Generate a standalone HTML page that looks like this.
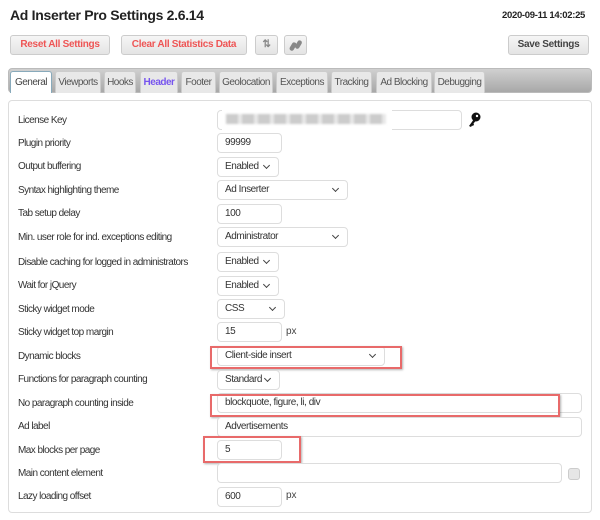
<!DOCTYPE html><html><head><style>
*{box-sizing:border-box}body{margin:0;width:600px;height:520px;background:#fff;font-family:"Liberation Sans",Arial,sans-serif;font-size:10px;color:#222;position:relative;overflow:hidden}
.a{position:absolute}
.btn{position:absolute;top:35px;height:20px;border:1px solid #ccc;border-radius:3px;background:linear-gradient(#f6f6f6,#e4e4e4);color:#e55;font-weight:bold;font-size:10px;letter-spacing:-0.3px;text-align:center;line-height:18px;white-space:nowrap}
.tabs{position:absolute;left:8px;top:68px;width:584px;height:25px;border:1px solid #bbb;border-radius:4px;background:linear-gradient(#d0d0d0,#a8a8a8)}
.tab{position:absolute;top:71px;height:22px;background:#e8e8e8;border:1px solid #ccc;border-bottom:none;border-radius:3px 3px 0 0;line-height:21px;text-align:center;color:#555;font-size:10px;letter-spacing:-0.5px;white-space:nowrap}
.panel{position:absolute;left:8px;top:100px;width:584px;height:413px;border:1px solid #ddd;border-radius:4px}
.l{position:absolute;left:18px;font-size:10px;letter-spacing:-0.55px;color:#333;white-space:nowrap}
.in{position:absolute;left:217px;height:20px;border:1px solid #ddd;border-radius:4px;padding-left:7px;line-height:18px;font-size:10px;letter-spacing:-0.45px;color:#333;background:#fff;white-space:nowrap}
.sel:after{content:"";position:absolute;right:9px;top:5px;width:4px;height:4px;border-right:1.5px solid #444;border-bottom:1.5px solid #444;transform:rotate(45deg)}
.red{position:absolute;border:2.5px solid #e86a6a;box-shadow:1px 1px 2px rgba(0,0,0,.3)}
.px{position:absolute;left:286px;font-size:10px;color:#444}
</style></head><body>
<div class="a" style="left:10px;top:7px;font-size:14px;font-weight:bold;color:#222;letter-spacing:-0.3px">Ad Inserter Pro Settings 2.6.14</div>
<div class="a" style="left:502px;top:10px;font-size:9.5px;font-weight:bold;letter-spacing:-0.3px">2020-09-11 14:02:25</div>
<div class="btn" style="left:10px;width:100px">Reset All Settings</div>
<div class="btn" style="left:121px;width:126px">Clear All Statistics Data</div>
<div class="btn" style="left:255px;width:23px;color:#888">⇅</div>
<div class="btn" style="left:284px;width:23px;color:#888"><svg width="14" height="12" viewBox="0 0 14 12" style="margin-top:3px"><rect x="2" y="3" width="4.5" height="9" rx="2.2" transform="rotate(30 4 7)" fill="#888"/><rect x="7.5" y="1" width="4.5" height="9" rx="2.2" transform="rotate(30 9.5 5)" fill="#888"/></svg></div>
<div class="btn" style="left:508px;width:81px;color:#444">Save Settings</div>
<div class="tabs"></div>
<div class="tab" style="left:10px;width:42px;background:#fff;border-color:#8ab;color:#444">General</div>
<div class="tab" style="left:55px;width:46px">Viewports</div>
<div class="tab" style="left:104px;width:32px">Hooks</div>
<div class="tab" style="left:140px;width:38px;color:#7755ee;font-weight:bold">Header</div>
<div class="tab" style="left:181px;width:35px">Footer</div>
<div class="tab" style="left:219px;width:54px">Geolocation</div>
<div class="tab" style="left:276px;width:52px">Exceptions</div>
<div class="tab" style="left:331px;width:41px">Tracking</div>
<div class="tab" style="left:376px;width:56px">Ad Blocking</div>
<div class="tab" style="left:434px;width:51px">Debugging</div>
<div class="panel"></div>
<div class="l" style="top:115px">License Key</div>
<div class="in" style="top:110px;width:245px"></div>
<div class="a" style="left:222px;top:101px;width:170px;height:38px;background:#fff"></div>
<div class="a" style="left:226px;top:114px;width:160px;height:10px;background:repeating-linear-gradient(90deg,#ccc 0 12px,#e8e8e8 12px 16px);filter:blur(1px)"></div>
<svg class="a" style="left:467px;top:112px" width="14" height="16" viewBox="0 0 14 16"><circle cx="9" cy="5" r="4.5" fill="#111"/><path d="M7 7 L2 14 L4 15 L5 13.5 L6 14 L7 12.5 L6.5 11.5 L9 8.5Z" fill="#111"/><circle cx="10" cy="4" r="1.2" fill="#fff"/></svg>
<div class="l" style="top:138px">Plugin priority</div><div class="in" style="top:133px;width:65px">99999</div>
<div class="l" style="top:161px">Output buffering</div><div class="in sel" style="top:157px;width:62px">Enabled</div>
<div class="l" style="top:185px">Syntax highlighting theme</div><div class="in sel" style="top:180px;width:131px">Ad Inserter</div>
<div class="l" style="top:208px">Tab setup delay</div><div class="in" style="top:204px;width:65px">100</div>
<div class="l" style="top:232px">Min. user role for ind. exceptions editing</div><div class="in sel" style="top:227px;width:131px">Administrator</div>
<div class="l" style="top:257px">Disable caching for logged in administrators</div><div class="in sel" style="top:252px;width:62px">Enabled</div>
<div class="l" style="top:280px">Wait for jQuery</div><div class="in sel" style="top:276px;width:62px">Enabled</div>
<div class="l" style="top:304px">Sticky widget mode</div><div class="in sel" style="top:299px;width:68px">CSS</div>
<div class="l" style="top:327px">Sticky widget top margin</div><div class="in" style="top:322px;width:65px">15</div><div class="px" style="top:326px">px</div>
<div class="l" style="top:351px">Dynamic blocks</div><div class="in sel" style="top:346px;width:168px">Client-side insert</div>
<div class="red" style="left:210px;top:346px;width:192px;height:23px"></div>
<div class="l" style="top:374px">Functions for paragraph counting</div><div class="in sel" style="top:370px;width:63px">Standard</div>
<div class="l" style="top:398px">No paragraph counting inside</div><div class="in" style="top:393px;width:365px">blockquote, figure, li, div</div>
<div class="red" style="left:210px;top:394px;width:350px;height:23px"></div>
<div class="l" style="top:421px">Ad label</div><div class="in" style="top:417px;width:365px">Advertisements</div>
<div class="l" style="top:445px">Max blocks per page</div><div class="in" style="top:440px;width:65px">5</div>
<div class="red" style="left:203px;top:436px;width:98px;height:27px"></div>
<div class="l" style="top:468px">Main content element</div><div class="in" style="top:463px;width:345px"></div>
<div class="a" style="left:568px;top:468px;width:12px;height:12px;border:1px solid #ccc;border-radius:3px;background:#e6e6e6"></div>
<div class="l" style="top:491px">Lazy loading offset</div><div class="in" style="top:487px;width:65px">600</div><div class="px" style="top:490px">px</div>
</body></html>
